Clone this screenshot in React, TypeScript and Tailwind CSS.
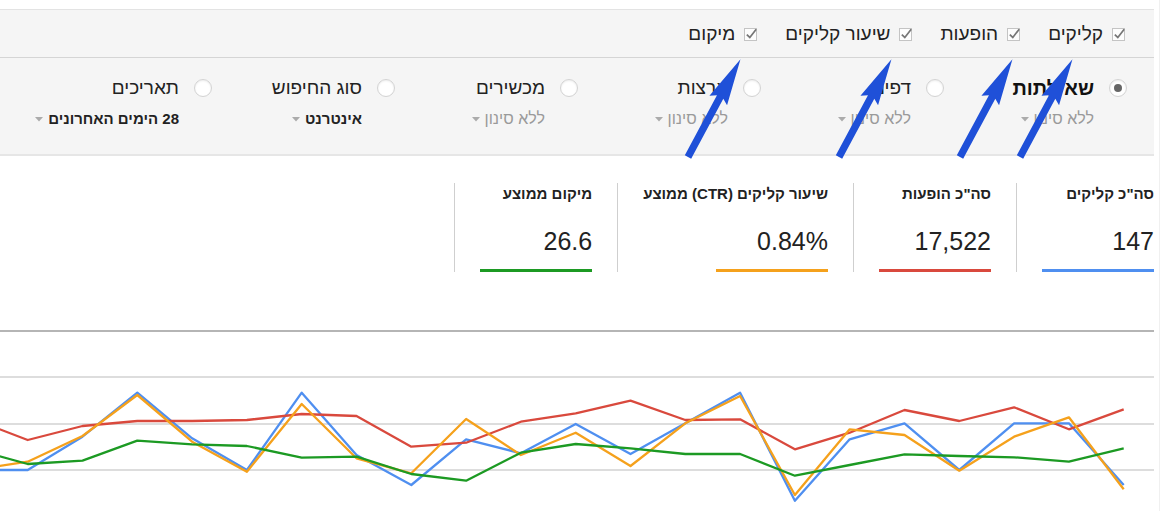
import React from 'react';

const metricsToggles = ['קליקים', 'הופעות', 'שיעור קליקים', 'מיקום'];

const dimensions = [
  { label: 'שאילתות', sub: 'ללא סינון', selected: true, strong: false },
  { label: 'דפים', sub: 'ללא סינון', selected: false, strong: false },
  { label: 'ארצות', sub: 'ללא סינון', selected: false, strong: false },
  { label: 'מכשירים', sub: 'ללא סינון', selected: false, strong: false },
  { label: 'סוג החיפוש', sub: 'אינטרנט', selected: false, strong: true },
  { label: 'תאריכים', sub: '28 הימים האחרונים', selected: false, strong: true },
];

const totals = [
  { label: 'סה"כ קליקים', value: '147', line: 'bg-[#4f8ff0]' },
  { label: 'סה"כ הופעות', value: '17,522', line: 'bg-[#d9493d]' },
  { label: 'שיעור קליקים (CTR) ממוצע', value: '0.84%', line: 'bg-[#f5a11c]' },
  { label: 'מיקום ממוצע', value: '26.6', line: 'bg-[#1c9a23]' },
];

const series = [
  {
    color: '#4f8ff0',
    ys: [470, 470, 436.7, 392.7, 438.3, 470, 392.7, 455, 485, 439.3, 453.3, 424, 454, 423.3, 392.7, 500.7, 439.3, 423.3, 470, 423.3, 423.3, 485],
  },
  {
    color: '#d9493d',
    ys: [419, 440, 426, 421, 421, 420, 414, 416, 446.7, 442.7, 421.7, 413.3, 400.7, 420, 419.3, 449.3, 432.7, 410, 421, 407.3, 429.3, 409.3],
  },
  {
    color: '#f5a11c',
    ys: [470, 461.7, 436, 395, 441.7, 471.7, 404, 458.3, 473.3, 419, 455, 432.7, 466, 423.3, 396, 495, 429.3, 435, 470.7, 436.7, 417.3, 489.3],
  },
  {
    color: '#1c9a23',
    ys: [449, 464, 460.7, 440.7, 444.3, 446, 457.7, 456.7, 474, 480.7, 452.7, 444, 448.3, 454, 454, 475.7, 465, 454.3, 456, 457.3, 461.7, 448.3],
  },
];

// points sit every 54.8px, the first one just off the left edge
const toPoints = (ys: number[]) =>
  ys.map((y, i) => `${(28.7 + 54.8 * (i - 1)).toFixed(1)},${y}`).join(' ');

const Checkbox = () => (
  <svg width="16" height="16" viewBox="0 0 16 16" className="shrink-0">
    <rect x="1.5" y="2.5" width="12" height="12" fill="#fdfdfd" stroke="#c4c4c4" />
    <path d="M3.8 8.6 L6.8 11.4 L13.2 3.2" fill="none" stroke="#767676" strokeWidth="1.7" />
  </svg>
);

const Caret = () => (
  <svg width="8" height="5" viewBox="0 0 8 5" className="shrink-0">
    <polygon points="0,0 8,0 4,4.5" fill="#ababab" />
  </svg>
);

const arrowTails = [
  [1020, 157],
  [960, 157],
  [839, 157],
  [688, 157],
];

export default function App() {
  return (
    <div className="relative w-[1172px] h-[511px] overflow-hidden bg-white font-['Liberation_Sans',Arial,sans-serif] flex">
      <div dir="rtl" className="w-[1154px] shrink-0">
        <div className="mt-[9px] bg-[#f5f5f5] border-t border-[#e3e3e3] border-b-2 border-b-[#e6e6e6]">
          <div className="h-[48px] flex items-center gap-[26px] pr-[27px] border-b border-[#d5d5d5]">
            {metricsToggles.map((t) => (
              <div key={t} className="flex items-center gap-[8px]">
                <Checkbox />
                <span className="text-[19px] leading-[22px] text-[#222]">{t}</span>
              </div>
            ))}
          </div>
          <div className="h-[96px] flex pr-[27px] pt-[19px]">
            {dimensions.map((d) => (
              <div key={d.label} className="w-[183px] shrink-0 flex items-start gap-[15px]">
                <span className="mt-[2px] w-[18px] h-[18px] shrink-0 rounded-full border border-[#d3d3d3] bg-white shadow-[inset_0_1px_2px_rgba(0,0,0,0.08)] flex items-center justify-center">
                  {d.selected && <span className="w-[8px] h-[8px] rounded-full bg-[#666]" />}
                </span>
                <div>
                  <div className={d.selected ? 'text-[20px] leading-[22px] font-bold text-[#111]' : 'text-[19px] leading-[22px] text-[#222]'}>
                    {d.label}
                  </div>
                  <div className="mt-[11px] flex items-center gap-[5px]">
                    <span className={d.strong ? 'text-[15px] leading-[18px] font-bold text-[#222]' : 'text-[16px] leading-[18px] text-[#9a9a9a]'}>
                      {d.sub}
                    </span>
                    <Caret />
                  </div>
                </div>
              </div>
            ))}
          </div>
        </div>

        <div className="mt-[27px] flex">
          {totals.map((m, i) => (
            <div key={m.label} className={`border-l border-[#cfcfcf] pl-[25px] pt-[3px] h-[89px] ${i === 0 ? 'pr-0' : 'pr-[25px]'}`}>
              <div className="text-[15px] leading-[16px] font-bold text-[#222] whitespace-nowrap">{m.label}</div>
              <div className="mt-[24px] text-[25px] leading-[30px] text-[#222]">{m.value}</div>
              <div className={`mt-[13px] h-[3px] w-[112px] ${m.line}`} />
            </div>
          ))}
        </div>

        <svg width="1155" height="191" viewBox="0 320 1155 191" className="mt-[48px] block">
          <line x1="0" y1="331" x2="1155" y2="331" stroke="#9c9c9c" strokeWidth="1.5" />
          {[377, 424, 470].map((y) => (
            <line key={y} x1="0" y1={y} x2="1155" y2={y} stroke="#d2d2d2" strokeWidth="1.5" />
          ))}
          {series.map((s) => (
            <polyline
              key={s.color}
              points={toPoints(s.ys)}
              fill="none"
              stroke={s.color}
              strokeWidth="2.3"
              strokeLinejoin="round"
            />
          ))}
        </svg>
      </div>
      <div className="pl-[5px] h-full">
        <div className="h-full border-l border-[#f0f0f0]" />
      </div>

      {/* annotation arrows drawn over the screenshot */}
      <svg width="1172" height="511" className="absolute left-0 top-0 pointer-events-none">
        {arrowTails.map(([x, y]) => (
          <polygon
            key={x}
            transform={`translate(${x} ${y}) rotate(-61.8)`}
            points="0,-3.6 68,-3.6 64,-10 111,0 64,10 68,3.6 0,3.6"
            fill="#1f50d8"
          />
        ))}
      </svg>
    </div>
  );
}
